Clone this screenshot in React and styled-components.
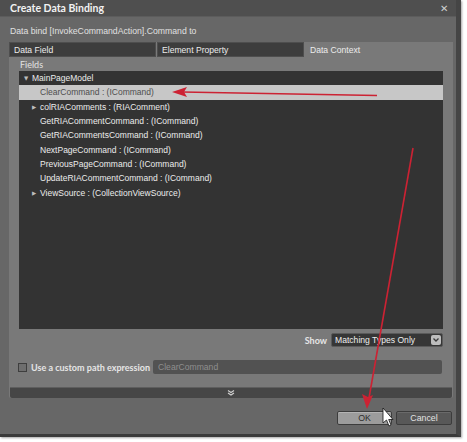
import React from "react";
import styled, { createGlobalStyle } from "styled-components";

const Global = createGlobalStyle`
  html, body { margin: 0; padding: 0; background: #ffffff; }
  body { font-family: "Lato", "Open Sans", sans-serif; }
  #root { width: 467px; height: 442px; position: relative; overflow: hidden; }
`;

const ui = `"Liberation Sans", Arial, sans-serif`;

const Dialog = styled.div`
  position: relative;
  width: 456px;
  height: 434px;
  background: #676767;
  border-right: 5px solid #454545;
  border-bottom: 3px solid #3a3a3a;
  box-shadow: 1px 1px 2px rgba(0,0,0,0.35);
  display: flex;
  flex-direction: column;
  color: #e6e6e6;
  font-size: 9px;
  white-space: nowrap;
`;

const TitleBar = styled.div`
  height: 17px;
  flex: none;
  background: #4f4f4f;
  border-bottom: 1px solid #5c5c5c;
  box-sizing: border-box;
  display: flex;
  align-items: center;
  justify-content: space-between;
  padding: 0 8px 0 10px;
  font-weight: 700;
  font-size: 10.5px;
  color: #f2f2f2;
`;

const Close = styled.span`
  font-size: 10px;
  font-weight: 400;
  color: #cfcfcf;
`;

const Body = styled.div`
  flex: 1;
  display: flex;
  flex-direction: column;
  padding: 0 3px 0 9px;
`;

const Prompt = styled.div`
  height: 25px;
  display: flex;
  align-items: center;
  padding: 2px 0 0 1px;
  box-sizing: border-box;
  color: #e0e0e0;
  font-family: ${ui};
  font-size: 8.7px;
`;

const Panel = styled.div`
  width: 444px;
  height: 356px;
  background: #797979;
  display: flex;
  flex-direction: column;
  border-radius: 2px;
`;

const TabRow = styled.div`
  display: grid;
  grid-template-columns: 147px 147px 1fr;
  column-gap: 1px;
  height: 15px;
  flex: none;
`;

const Tab = styled.div`
  background: ${p => (p.$active ? "#797979" : "#3d3d3d")};
  border: 1px solid ${p => (p.$active ? "#797979" : "#4e4e4e")};
  box-sizing: border-box;
  display: flex;
  align-items: center;
  padding-left: 4px;
  color: #ececec;
  font-family: ${ui};
  font-size: 8.6px;
`;

const PanelInner = styled.div`
  flex: 1;
  display: flex;
  flex-direction: column;
  padding: 0 10px 0 10px;
`;

const FieldsLabel = styled.div`
  height: 14px;
  display: flex;
  align-items: center;
  padding-left: 1px;
  font-size: 9px;
  color: #e2e2e2;
`;

const Tree = styled.div`
  height: 258px;
  background: #333333;
  display: flex;
  flex-direction: column;
  flex: none;
`;

const Row = styled.div`
  height: 14.3px;
  display: flex;
  align-items: center;
  padding-left: ${p => 5 + p.$depth * 8}px;
  background: ${p => (p.$selected ? "#c7c7c7" : "transparent")};
  color: ${p => (p.$selected ? "#4e4e4e" : "#ececec")};
  font-family: ${ui};
  font-size: 8.5px;
`;

const Expander = styled.span`
  width: 8px;
  flex: none;
  font-family: "DejaVu Sans", sans-serif;
  font-size: 5.5px;
  color: #bdbdbd;
  display: flex;
  align-items: center;
`;

const ShowRow = styled.div`
  display: flex;
  justify-content: flex-end;
  align-items: center;
  gap: 4px;
  margin-top: 4px;
  height: 14px;
`;

const ShowLabel = styled.span`
  color: #e6e6e6;
  font-weight: 700;
  font-size: 9px;
`;

const Select = styled.div`
  width: 112px;
  height: 14px;
  box-sizing: border-box;
  background: #363636;
  border: 1px solid #5a5a5a;
  border-radius: 2px;
  display: flex;
  align-items: center;
  justify-content: space-between;
  padding-left: 3px;
  color: #eeeeee;
  font-family: ${ui};
  font-size: 8.6px;
`;

const SelectButton = styled.span`
  width: 10px;
  height: 10px;
  margin-right: 1px;
  background: #bdbdbd;
  border-radius: 2px;
  display: flex;
  align-items: center;
  justify-content: center;
`;

const PathRow = styled.div`
  display: flex;
  align-items: center;
  margin-top: 13px;
  height: 14px;
`;

const Check = styled.span`
  width: 9px;
  height: 9px;
  box-sizing: border-box;
  border: 1px solid #3e3e3e;
  background: #6e6e6e;
  margin-left: -1px;
  margin-right: 4px;
  flex: none;
`;

const CheckLabel = styled.span`
  color: #e6e6e6;
  font-weight: 700;
  font-size: 9px;
  width: 122px;
  flex: none;
`;

const PathInput = styled.div`
  flex: 1;
  height: 14px;
  background: #525252;
  border-radius: 2px;
  display: flex;
  align-items: center;
  padding-left: 5px;
  color: #8e8e8e;
  margin-right: 1px;
  font-family: ${ui};
  font-size: 8.6px;
`;

const Expand = styled.div`
  margin-top: auto;
  margin-left: 1px;
  margin-right: 1px;
  height: 10px;
  background: #464646;
  border-top: 1px solid #5e5e5e;
  border-radius: 0 0 2px 2px;
  display: flex;
  align-items: center;
  justify-content: center;
`;

const Footer = styled.div`
  display: flex;
  justify-content: flex-end;
  gap: 4px;
  margin-top: 13px;
  padding-right: 1px;
`;

const Button = styled.div`
  width: ${p => p.$w}px;
  height: 14px;
  box-sizing: border-box;
  border: 1px solid #3c3c3c;
  border-radius: 2px;
  background: ${p => (p.$primary ? "#9c9c9c" : "#585858")};
  box-shadow: inset 0 1px 0 ${p => (p.$primary ? "#b4b4b4" : "#6a6a6a")};
  color: ${p => (p.$primary ? "#2e2e2e" : "#e2e2e2")};
  display: flex;
  align-items: center;
  justify-content: center;
  font-family: ${ui};
  font-size: 8.8px;
`;

const Overlay = styled.svg`
  position: absolute;
  left: 0;
  top: 0;
  pointer-events: none;
`;

const items = [
  { label: "MainPageModel", depth: 0, exp: "open" },
  { label: "ClearCommand : (ICommand)", depth: 1, selected: true },
  { label: "colRIAComments : (RIAComment)", depth: 1, exp: "closed" },
  { label: "GetRIACommentCommand : (ICommand)", depth: 1 },
  { label: "GetRIACommentsCommand : (ICommand)", depth: 1 },
  { label: "NextPageCommand : (ICommand)", depth: 1 },
  { label: "PreviousPageCommand : (ICommand)", depth: 1 },
  { label: "UpdateRIACommentCommand : (ICommand)", depth: 1 },
  { label: "ViewSource : (CollectionViewSource)", depth: 1, exp: "closed" },
];

export default function App() {
  return (
    <>
      <Global />
      <Dialog>
        <TitleBar>
          <span>Create Data Binding</span>
          <Close>✕</Close>
        </TitleBar>
        <Body>
          <Prompt>Data bind [InvokeCommandAction].Command to</Prompt>
          <Panel>
            <TabRow>
              <Tab>Data Field</Tab>
              <Tab>Element Property</Tab>
              <Tab $active>Data Context</Tab>
            </TabRow>
            <PanelInner>
              <FieldsLabel>Fields</FieldsLabel>
              <Tree>
                {items.map(it => (
                  <Row key={it.label} $depth={it.depth} $selected={it.selected}>
                    <Expander>
                      {it.exp === "open" ? "▼" : it.exp === "closed" ? "▶" : ""}
                    </Expander>
                    {it.label}
                  </Row>
                ))}
              </Tree>
              <ShowRow>
                <ShowLabel>Show</ShowLabel>
                <Select>
                  <span>Matching Types Only</span>
                  <SelectButton>
                    <svg width="6" height="4" viewBox="0 0 6 4">
                      <path d="M0.5 0.5 L3 3 L5.5 0.5" fill="none" stroke="#3a3a3a" strokeWidth="1.3" />
                    </svg>
                  </SelectButton>
                </Select>
              </ShowRow>
              <PathRow>
                <Check />
                <CheckLabel>Use a custom path expression</CheckLabel>
                <PathInput>ClearCommand</PathInput>
              </PathRow>
            </PanelInner>
            <Expand>
              <svg width="8" height="6" viewBox="0 0 8 6">
                <path d="M1 0.5 L4 2.5 L7 0.5 M1 3 L4 5 L7 3" fill="none" stroke="#d0d0d0" strokeWidth="1.1" />
              </svg>
            </Expand>
          </Panel>
          <Footer>
            <Button $w={55} $primary>OK</Button>
            <Button $w={56}>Cancel</Button>
          </Footer>
        </Body>
        <Overlay width="467" height="442" viewBox="0 0 467 442">
          <line x1="377" y1="95.5" x2="182" y2="92" stroke="#cc2233" strokeWidth="1.6" />
          <polygon points="172,92 187,87 184,92 187,97" fill="#cc2233" />
          <line x1="413" y1="148" x2="369" y2="398" stroke="#cc2233" strokeWidth="1.6" />
          <polygon points="367,409 362,394 368,397 373,395" fill="#cc2233" />
          <polygon
            points="383,408 383,423 386.5,420 389,426 391,425 388.7,419.5 393,419.5"
            fill="#ffffff"
            stroke="#111111"
            strokeWidth="0.8"
          />
        </Overlay>
      </Dialog>
    </>
  );
}
